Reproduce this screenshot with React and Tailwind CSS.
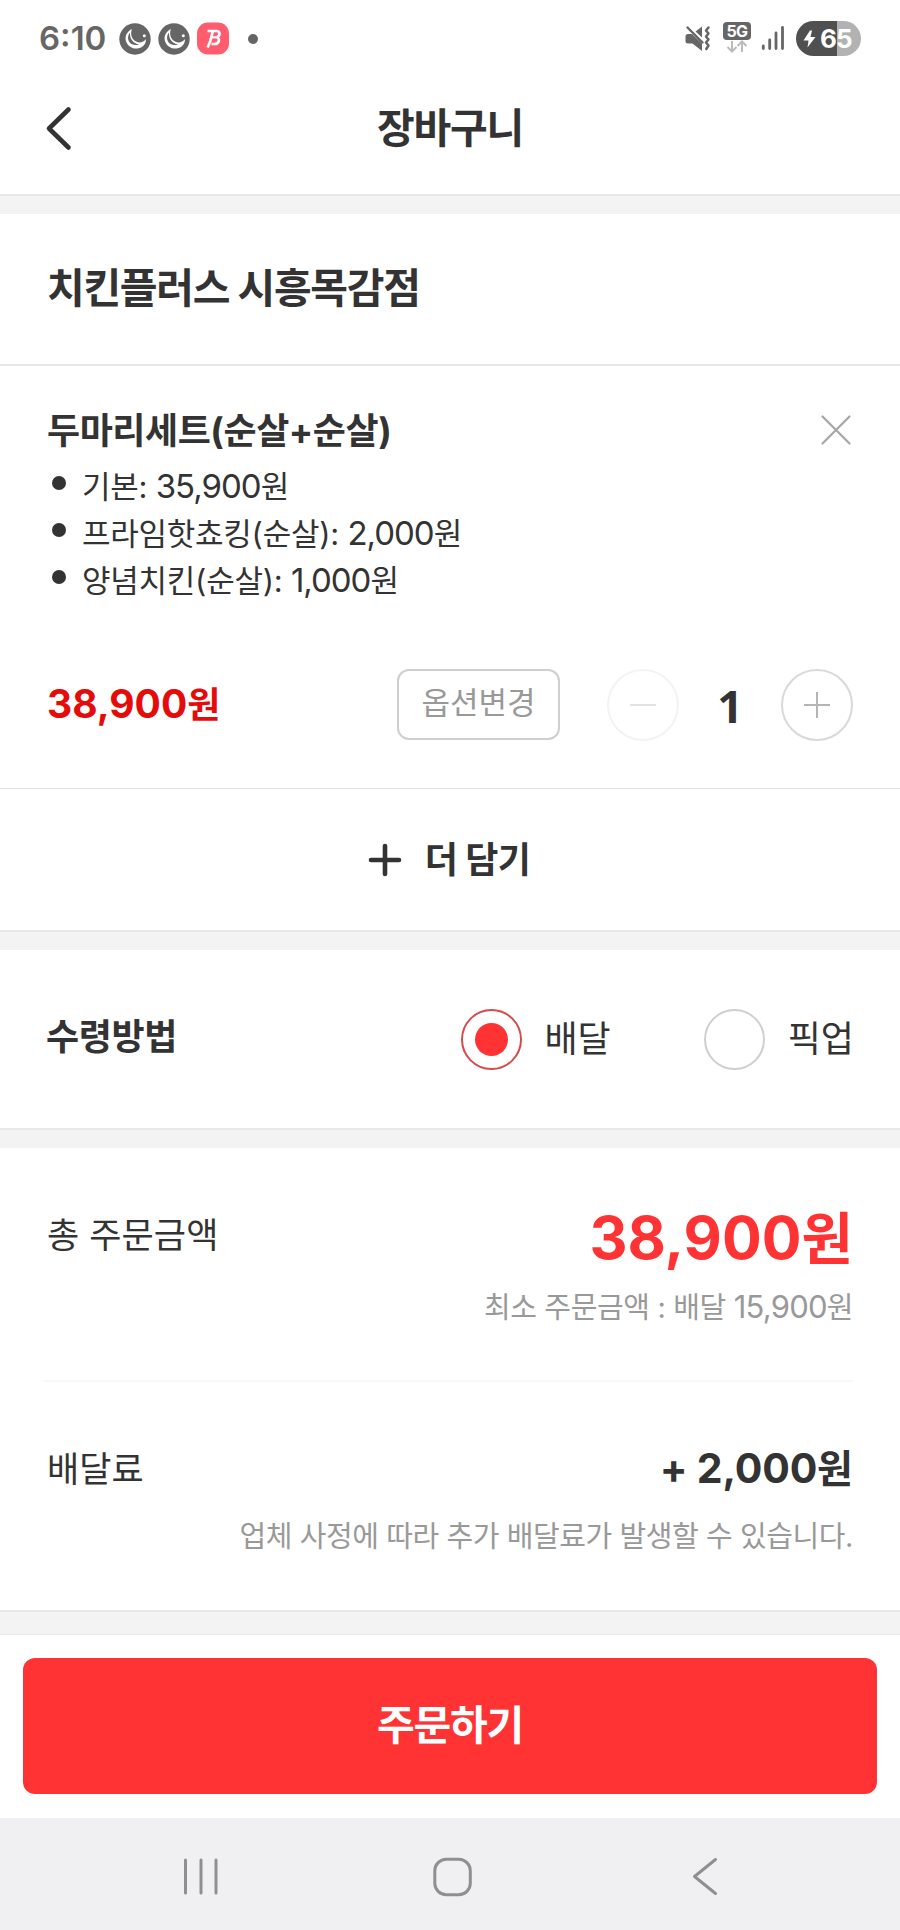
import React, { useState } from 'react';

const options = [
  { name: '기본', price: '35,900' },
  { name: '프라임핫쵸킹(순살)', price: '2,000' },
  { name: '양념치킨(순살)', price: '1,000' },
];

const MoonBadge = () => (
  <svg width="32" height="32" viewBox="0 0 32 32">
    <circle cx="16" cy="16" r="15.7" fill="#666" />
    <path d="M13 6 C7.5 8.5 5.3 14 7.3 19 C10 25.5 18 27.5 23.5 23.5 C26 21.5 27 19 27 16 C24.5 19.5 20.5 20.5 17 18.5 C12.5 16 11 11 13 6 Z" fill="#fff" />
    <path d="M11 9.5 C8 13 8.5 18.5 12.5 21 C15 22.5 18 22.3 20 21.5 C14.5 20.5 10.5 16 11 9.5 Z" fill="#666" />
    <circle cx="25.3" cy="12.7" r="1.5" fill="#fff" />
  </svg>
);

const StatusBar = () => (
  <div className="flex h-[76px] items-start justify-between pr-[39px] pl-[39px] pt-[22px]">
    <div className="flex items-center">
      <span className="w-[80px] text-[33px] leading-[33px] font-semibold text-[#666]">6:10</span>
      <MoonBadge />
      <div className="ml-[7px]">
        <MoonBadge />
      </div>
      <svg className="ml-[7px]" width="32" height="33" viewBox="0 0 32 33">
        <rect x="0" y="0.5" width="32" height="32" rx="11" fill="#ff5c6e" />
        <path d="M10.5 9 H19.5 C23.5 9 23.5 14.3 19.5 15.2 C23.5 16 22.5 22 17.5 22 H14.5 M15.8 9.5 L13 20 L10.5 25.5" fill="none" stroke="#fff" strokeWidth="2.7" strokeLinejoin="round" />
        <path d="M14.5 15.3 H19" stroke="#fff" strokeWidth="2.2" />
      </svg>
      <span className="ml-[19px] size-[10px] rounded-full bg-[#666]" />
    </div>

    <div className="flex items-start">
      <svg className="mt-[3px]" width="26" height="27" viewBox="0 0 26 27">
        <path d="M0.5 11.5 Q0.5 9 3 9 H7 L17 18.5 V26 L7.5 18.5 H3 Q0.5 18.5 0.5 16 Z" fill="#666" />
        <path d="M10.5 6.5 L17 1.5 V12.5 Z" fill="#666" />
        <path d="M2.5 2.5 L17.5 17.5" stroke="#666" strokeWidth="2.4" strokeLinecap="round" />
        <path d="M23.5 2.5 L21 5.5 L23.5 8.5 L21 11.5 L23.5 14.5 L21 17.5 L23.5 20.5 L21.3 24" fill="none" stroke="#666" strokeWidth="2.5" strokeLinecap="round" strokeLinejoin="round" />
      </svg>
      <div className="ml-[12px] flex w-[28px] flex-col items-center">
        <span className="h-[18px] w-[28px] rounded-[4px] bg-[#666] text-center text-[16px] leading-[18px] font-bold tracking-[-0.5px] text-white">5G</span>
        <svg width="22" height="13" viewBox="0 0 22 13" fill="none" stroke="#bbb" strokeWidth="2">
          <path d="M6 1 V11.5 M1.5 7 L6 11.5 L10.5 7" />
          <path d="M16 12 V1.5 M11.5 6 L16 1.5 L20.5 6" />
        </svg>
      </div>
      <svg className="ml-[10px] mt-[3px]" width="24" height="26" viewBox="0 0 24 26" stroke="#666" strokeWidth="2.8" strokeLinecap="round">
        <path d="M2.3 21 V23.5 M8.7 15 V23.5 M15 8 V23.5 M21.5 2.5 V23.5" />
      </svg>
      <div className="-mt-px ml-[11px] flex h-[35px] w-[65px] items-center rounded-full bg-linear-to-r from-[#505050] from-63% to-[#b2b2b2] to-63% pl-[7px]">
        <svg width="13" height="18" viewBox="0 0 13 18">
          <path d="M7 0.5 L0.5 10.5 H5.5 L4.5 17.5 L12.5 7 H7.5 L9 0.5 Z" fill="#fff" />
        </svg>
        <span className="ml-[4px] text-[26px] leading-[34px] font-bold tracking-[-0.8px] text-white">65</span>
      </div>
    </div>
  </div>
);

const Gap = () => <div className="h-[20px] border-t-2 border-[#e8e8e8] bg-[#f3f3f3]" />;

const Radio = ({ label, checked, onChange }) => (
  <button onClick={onChange} className="flex items-center">
    <span
      className={
        checked
          ? 'flex size-[61px] items-center justify-center rounded-full border-2 border-[#d84a4a]'
          : 'flex size-[61px] items-center justify-center rounded-full border-2 border-[#cfcfcf]'
      }
    >
      {checked && <span className="size-[33px] rounded-full bg-[#ff3334]" />}
    </span>
    <span className="ml-[23px] text-[36px] leading-[40px]">{label}</span>
  </button>
);

const App = () => {
  const [method, setMethod] = useState('delivery');
  const [count, setCount] = useState(1);

  return (
    <div className="flex h-[1930px] w-[900px] flex-col bg-white font-['Inter','Noto_Sans_CJK_KR',sans-serif] text-[#333]">
      <StatusBar />

      <header className="grid h-[118px] grid-cols-[100px_1fr_100px] items-center pb-[15px]">
        <svg className="ml-[44px]" width="30" height="46" viewBox="0 0 30 46" fill="none" stroke="#333" strokeWidth="4.6" strokeLinecap="round" strokeLinejoin="round">
          <path d="M24.5 4.5 L5 23.5 L24.5 42.5" />
        </svg>
        <h1 className="text-center text-[41px] leading-[48px] font-bold tracking-[-1.2px]">장바구니</h1>
      </header>
      <Gap />

      <section className="flex h-[152px] items-center border-b-2 border-[#e8e8e8] px-[47px] pb-[2px]">
        <h2 className="text-[41px] leading-[48px] font-bold tracking-[-1.3px]">치킨플러스 시흥목감점</h2>
      </section>

      <section className="flex h-[423px] flex-col border-b border-[#e2e2e2] pt-[41px] pr-[47px] pl-[47px]">
        <div className="flex items-center justify-between">
          <h3 className="text-[36px] leading-[48px] font-bold tracking-[-0.45px]">두마리세트(순살+순살)</h3>
          <svg className="mr-px mb-[2px]" width="32" height="32" viewBox="0 0 32 32" stroke="#a8a8a8" strokeWidth="2.3" strokeLinecap="round">
            <path d="M2.5 2.5 L29.5 29.5 M29.5 2.5 L2.5 29.5" />
          </svg>
        </div>
        <ul className="mt-[8px]">
          {options.map((o) => (
            <li key={o.name} className="flex h-[47px] items-center">
              <span className="mr-[16px] mb-[7px] ml-[5px] size-[14px] rounded-full bg-[#333]" />
              <span className="text-[31px] leading-[47px] tracking-[-0.25px] whitespace-pre">
                {o.name}: <span className="text-[33px] tracking-[-1px]">{o.price}</span>원
              </span>
            </li>
          ))}
        </ul>
        <div className="mt-[65px] flex h-[72px] items-center">
          <span className="mb-[2px] text-[36px] leading-[48px] font-bold text-[#e60b0b]">
            <span className="text-[39px]">38,900</span>원
          </span>
          <button className="mb-px ml-auto h-[71px] w-[163px] rounded-[12px] border-2 border-[#cfcfcf] pb-[2px] text-[31px] text-[#999]">옵션변경</button>
          <button
            onClick={() => setCount(Math.max(1, count - 1))}
            className="ml-[47px] flex size-[72px] items-center justify-center rounded-full border-2 border-[#f3f3f3]"
          >
            <span className="h-[2px] w-[26px] bg-[#e2e2e2]" />
          </button>
          <span className="w-[102px] pt-[1px] text-center font-['Open_Sans'] text-[45px] leading-[60px] font-bold">{count}</span>
          <button
            onClick={() => setCount(count + 1)}
            className="flex size-[72px] items-center justify-center rounded-full border-2 border-[#d9d9d9]"
          >
            <svg width="26" height="26" viewBox="0 0 26 26" stroke="#b5b5b5" strokeWidth="2">
              <path d="M0 13 H26 M13 0 V26" />
            </svg>
          </button>
        </div>
      </section>

      <button className="flex h-[141px] items-center justify-center pr-[2px]">
        <svg className="mr-[23px]" width="34" height="34" viewBox="0 0 34 34" stroke="#333" strokeWidth="4.6" strokeLinecap="round">
          <path d="M3 17 H31 M17 3 V31" />
        </svg>
        <span className="text-[36px] leading-[48px] font-bold tracking-[-0.6px]">더 담기</span>
      </button>
      <Gap />

      <section className="flex h-[178px] items-center pr-[46px] pl-[46px]">
        <h3 className="mb-[4px] text-[36px] leading-[48px] font-bold tracking-[-0.4px]">수령방법</h3>
        <div className="ml-auto flex gap-[93px]">
          <Radio label="배달" checked={method === 'delivery'} onChange={() => setMethod('delivery')} />
          <Radio label="픽업" checked={method === 'pickup'} onChange={() => setMethod('pickup')} />
        </div>
      </section>
      <Gap />

      <section className="h-[462px] pr-[47px] pl-[44px]">
        <div className="flex h-[234px] justify-between border-b-2 border-[#f7f7f7] pt-[54px] pl-[3px]">
          <span className="mt-[9px] text-[35px] leading-[48px] tracking-[0.1px]">총 주문금액</span>
          <div className="flex flex-col items-end">
            <span className="text-[56px] leading-[72px] font-bold text-[#ff3334]">
              <span className="text-[59px]">38,900</span>원
            </span>
            <span className="mt-[12px] text-[29px] leading-[40px] tracking-[-0.35px] text-[#999]">
              최소 주문금액 : 배달 <span className="text-[31px] tracking-[-0.8px]">15,900</span>원
            </span>
          </div>
        </div>
        <div className="flex justify-between pt-[62px] pl-[3px]">
          <span className="pt-px text-[35px] leading-[48px]">배달료</span>
          <div className="flex flex-col items-end">
            <span className="text-[39px] leading-[48px] font-bold">
              <span className="text-[41px] tracking-[-0.2px]">+ 2,000</span>원
            </span>
            <span className="mt-[24px] text-[29px] leading-[40px] tracking-[-0.42px] text-[#999]">업체 사정에 따라 추가 배달료가 발생할 수 있습니다.</span>
          </div>
        </div>
      </section>
      <div className="h-[25px] border-t-2 border-b border-[#e8e8e8] bg-[#f3f3f3]" />

      <div className="h-[183px] px-[23px] pt-[23px]">
        <button className="h-[136px] w-full rounded-[12px] bg-[#ff3334] text-[41px] font-bold tracking-[-1.2px] text-white">주문하기</button>
      </div>

      <nav className="h-[112px] bg-[#f0f0f2]">
        <svg width="900" height="112" viewBox="0 0 900 112" fill="none" stroke="#8f8f8f" strokeWidth="3" strokeLinecap="round" strokeLinejoin="round">
          <path d="M185.5 42 V75 M201 42 V75 M216 42 V75" />
          <rect x="434.8" y="41.3" width="35.5" height="35.5" rx="11.5" />
          <path d="M715.5 41.5 L694.5 58.5 L715.5 75.5" />
        </svg>
      </nav>
    </div>
  );
};

export default App;
